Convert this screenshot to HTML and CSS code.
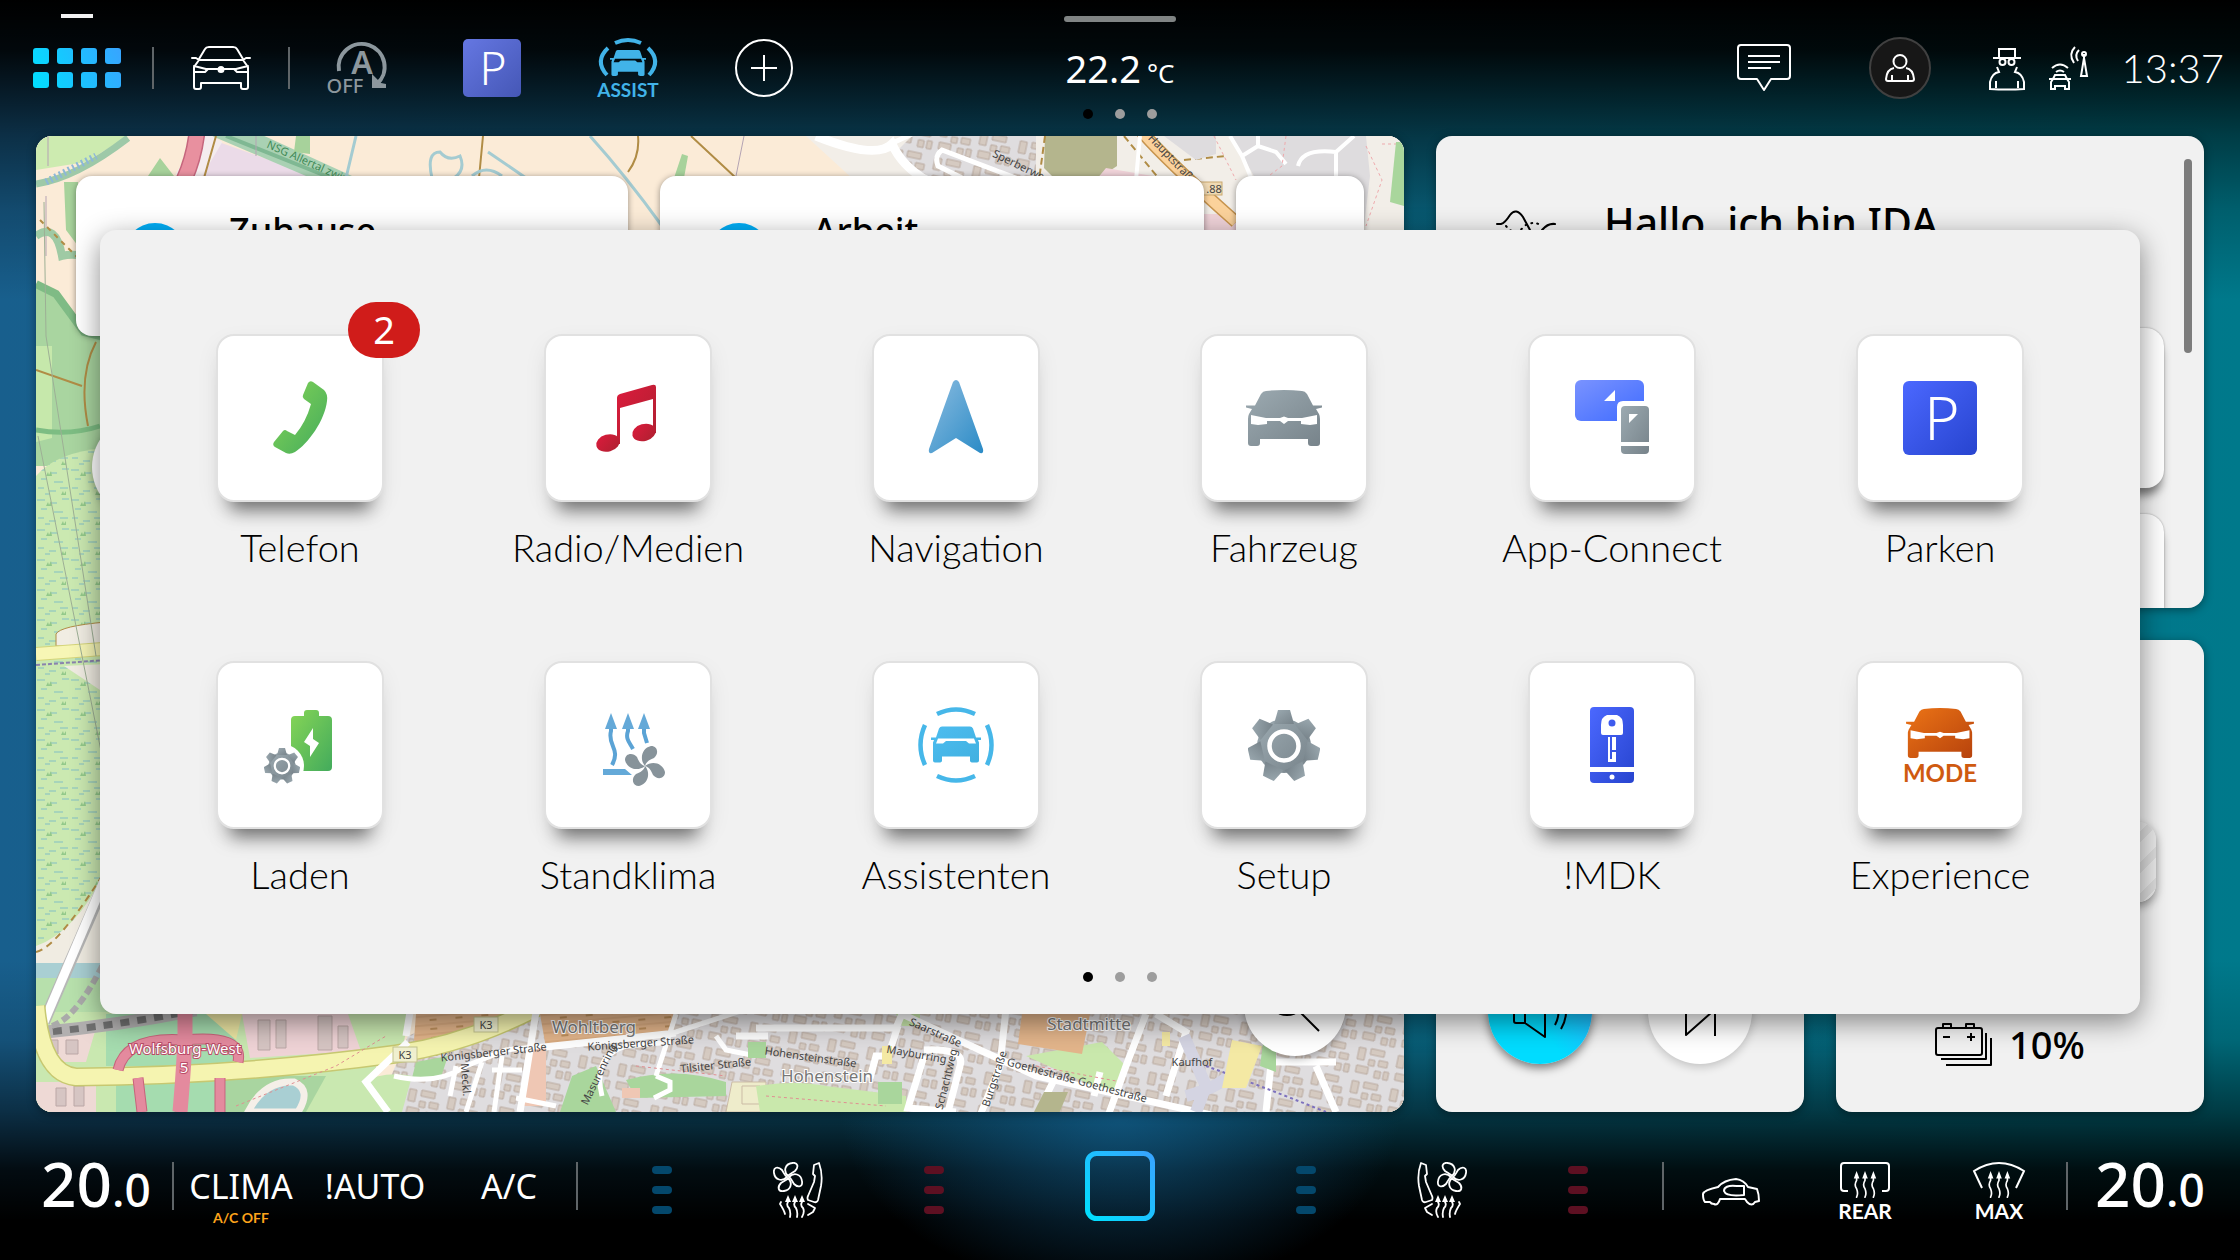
FILE: index.html
```html
<!DOCTYPE html>
<html lang="de">
<head>
<meta charset="utf-8">
<meta name="viewport" content="width=device-width, initial-scale=1">
<title>Infotainment</title>
<link rel="stylesheet" href="styles.css">
</head>
<body>
<svg class="defs" width="0" height="0" aria-hidden="true">
  <defs>
    <linearGradient id="g-green" x1="0" y1="0" x2="1" y2="1"><stop offset="0" stop-color="#86d556"/><stop offset="1" stop-color="#43ab5c"/></linearGradient>
    <linearGradient id="g-red" x1="0" y1="0" x2="1" y2="1"><stop offset="0" stop-color="#dc1b3c"/><stop offset="1" stop-color="#ad2030"/></linearGradient>
    <linearGradient id="g-blue" x1="0" y1="0" x2="1" y2="1"><stop offset="0" stop-color="#8bbce0"/><stop offset="1" stop-color="#2b8bc6"/></linearGradient>
    <linearGradient id="g-grey" x1="0" y1="0" x2="1" y2="1"><stop offset="0" stop-color="#9caab1"/><stop offset="1" stop-color="#77838a"/></linearGradient>
    <linearGradient id="g-indigo" x1="0" y1="0" x2="1" y2="1"><stop offset="0" stop-color="#4b68ff"/><stop offset="1" stop-color="#2744cf"/></linearGradient>
    <linearGradient id="g-sky" x1="0" y1="0" x2="1" y2="1"><stop offset="0" stop-color="#7a93ff"/><stop offset="1" stop-color="#3f6bff"/></linearGradient>
    <linearGradient id="g-cyan" x1="0" y1="0" x2="1" y2="1"><stop offset="0" stop-color="#4dbdf0"/><stop offset="1" stop-color="#40b0e0"/></linearGradient>
    <linearGradient id="g-orange" x1="0" y1="0" x2="1" y2="1"><stop offset="0" stop-color="#ec7416"/><stop offset="1" stop-color="#b6420c"/></linearGradient>
    <linearGradient id="g-park" x1="0" y1="0" x2="1" y2="1"><stop offset="0" stop-color="#6577e2"/><stop offset="1" stop-color="#4557b6"/></linearGradient>
    <linearGradient id="g-home" x1="0" y1="1" x2="1" y2="0"><stop offset="0" stop-color="#00e0ff"/><stop offset="1" stop-color="#38a4ff"/></linearGradient>
    <linearGradient id="g-apps" gradientUnits="userSpaceOnUse" x1="0" y1="40" x2="88" y2="0"><stop offset="0" stop-color="#00e0ff"/><stop offset="1" stop-color="#38a4ff"/></linearGradient>

    <symbol id="car-solid" viewBox="0 0 76 56">
      <path fill-rule="evenodd" d="M20 1Q38 -1 56 1Q59 1 61 4L67 15.500H76V17.500L70 19L73 24Q74 26 74 29V53Q74 56 71 56H65Q62 56 62 53V49H14V53Q14 56 11 56H5Q2 56 2 53V29Q2 26 3 24L6 19L0 17.500V15.500H9L15 4Q17 1 20 1ZM5 25V34L12 35L21 34V31H34L38 34L42 31H55V34L64 35L71 34V25L56 28H42L38 26.500L34 28H20Z"/>
    </symbol>
    <symbol id="car-assist" viewBox="0 0 50 36">
      <path fill-rule="evenodd" d="M11 0H39Q41 0 42 2L45 11H50V13.500H47L48 16V34Q48 36 46 36H42Q39 36 39 34V30H11V34Q11 36 8 36H4Q2 36 2 34V16L3 13.500H0V11H5L8 2Q9 0 11 0ZM7 12L5 17H12L15 14.500H35L38 17H45L43 12Z"/>
    </symbol>
    <symbol id="gear" viewBox="-36 -36 72 72">
      <circle r="27"/>
      <g id="teeth">
        <path id="tooth" d="M-10 -22L-6 -36H6L10 -22Z"/>
        <use href="#tooth" transform="rotate(51.430)"/><use href="#tooth" transform="rotate(102.860)"/><use href="#tooth" transform="rotate(154.290)"/><use href="#tooth" transform="rotate(205.710)"/><use href="#tooth" transform="rotate(257.140)"/><use href="#tooth" transform="rotate(308.570)"/>
      </g>
      <circle r="14.500" fill="none" stroke="#fff" stroke-width="4.500"/>
    </symbol>
    <symbol id="seat" viewBox="0 0 50 56">
      <g fill="none" stroke="#fff" stroke-width="1.800" stroke-linejoin="round" stroke-linecap="round">
        <path id="vane" d="M15 14C10 9 12 2 19 1C25 0 26 5 22 9C19 11 16 12 15 14Z"/>
        <use href="#vane" transform="rotate(90 15 15)"/><use href="#vane" transform="rotate(180 15 15)"/><use href="#vane" transform="rotate(270 15 15)"/>
        <path d="M41 3L46 1Q50 12 48 24L45 38Q44 41 41 40L35 38Q34 36 35 34L41 20L42 14L40 12Z"/>
        <path d="M8 40L7 42Q11 48 12 52M35 42L42 46L40 50L35 53"/>
        <path d="M15 37V40Q13 43 16 46Q18 50 17 55M22 37V40Q20 43 23 46Q25 50 24 55M29 37V40Q27 43 30 46Q32 50 29 55"/>
      </g>
      <path fill="#fff" d="M12 40L15 33L18 40ZM19 40L22 33L25 40ZM26 40L29 33L32 40Z"/>
    </symbol>
    <symbol id="heat" viewBox="0 0 24 30">
      <path fill="none" stroke="#fff" stroke-width="1.800" stroke-linecap="round" d="M3 7V10Q0 15 3 19Q5 24 3 28M12 7V10Q9 15 12 19Q14 24 12 28M21 7V10Q18 15 21 19Q23 24 21 28"/>
      <path fill="#fff" d="M0 8L3 0L6 8ZM9 8L12 0L15 8ZM18 8L21 0L24 8Z"/>
    </symbol>

    <pattern id="marsh" width="34" height="30" patternUnits="userSpaceOnUse">
      <rect width="34" height="30" fill="#cbe9b1"/>
      <path d="M1 4H9M14 7H21M26 3H33M5 13H11M18 16H27M2 22H8M13 25H20M24 22H32M9 28H14" stroke="#84bfc3" stroke-width="1"/>
      <path d="M10 10l2-4 1 3 2-4 1 5zM25 29l2-4 1 3 2-3v4z" fill="#93c98a"/>
    </pattern>
    <pattern id="houses" width="40" height="34" patternUnits="userSpaceOnUse" patternTransform="rotate(12)">
      <rect width="40" height="34" fill="#dfdddf"/>
      <path d="M4 4h7v12h-7zM16 3h14v6h-14zM16 14h6v6h-6zM26 13h9v6h-9zM5 22h12v7h-12zM24 24h6v7h-6zM33 23h5v8h-5z" fill="#d5cac1" stroke="#b9aaa0" stroke-width="1"/>
    </pattern>
    <pattern id="allot" width="26" height="9" patternUnits="userSpaceOnUse" patternTransform="rotate(-5)">
      <rect width="26" height="9" fill="#e3b58b"/>
      <path d="M0 2H26" stroke="#cfa176" stroke-width="1"/><path d="M3 6H10" stroke="#9a6b2f" stroke-width="1"/>
    </pattern>
  </defs>
</svg>

<div class="screen">
  <header class="topbar">
    <nav class="top-left" aria-label="Schnellzugriff">
      <button class="slot slot-apps" aria-label="Apps" aria-expanded="true">
        <svg width="88" height="40" viewBox="0 0 88 40" fill="url(#g-apps)"><rect width="16" height="16" rx="3"/><rect x="24" width="16" height="16" rx="3"/><rect x="48" width="16" height="16" rx="3"/><rect x="72" width="16" height="16" rx="3"/><rect y="24" width="16" height="16" rx="3"/><rect x="24" y="24" width="16" height="16" rx="3"/><rect x="48" y="24" width="16" height="16" rx="3"/><rect x="72" y="24" width="16" height="16" rx="3"/></svg>
      </button>
      <button class="slot ruled" aria-label="Fahrzeug">
        <svg width="60" height="44" viewBox="0 0 60 44" fill="none" stroke="#fff" stroke-width="2" stroke-linejoin="round" stroke-linecap="round"><path d="M8 13L14 3Q15 1 18 1H42Q45 1 46 3L52 13M1 12H5L8 14H52L55 12H59M8 14L3 21V41Q3 43 5 43H8Q10 43 10 41V37H50V41Q50 43 52 43H55Q57 43 57 41V21L52 14M3 20L15 23H45L57 20M4 26H14L17 23M56 26H46L43 23"/><circle cx="30" cy="23.500" r="2.500" fill="#fff"/></svg>
      </button>
      <button class="slot ruled" aria-label="Start-Stopp aus">
        <svg width="62" height="54" viewBox="0 0 62 54"><path d="M13 30A23 23 0 1 1 51 43" fill="none" stroke="#8c979d" stroke-width="4"/><path d="M46 33V47H60V43L55 42Z" fill="#8c979d"/><text x="36" y="33" class="t-auto">A</text><text x="19" y="52" class="t-off">OFF</text></svg>
      </button>
      <button class="slot" aria-label="Parken">
        <svg width="58" height="58" viewBox="0 0 58 58"><rect width="58" height="58" rx="5" fill="url(#g-park)"/><text x="30" y="46" class="t-park-s">P</text></svg>
      </button>
      <button class="slot" aria-label="Assistenzsysteme">
        <svg width="64" height="60" viewBox="0 0 64 60"><g fill="none" stroke="#41b3e8" stroke-width="4"><path d="M19 5Q32 -1 45 5"/><path d="M12 10Q-2 23 11 37M52 10Q66 23 53 37"/></g><use href="#car-assist" x="14" y="12" width="36" height="26" fill="#41b3e8"/><text x="32" y="59" class="t-assist">ASSIST</text></svg>
      </button>
      <button class="slot" aria-label="Hinzufügen">
        <svg width="58" height="58" viewBox="0 0 58 58" fill="none" stroke="#fff" stroke-width="2"><circle cx="29" cy="29" r="28"/><path d="M29 16V42M16 29H42"/></svg>
      </button>
    </nav>
    <div class="top-center">
      <span class="handle"></span>
      <p class="outside">22.2<small>°C</small></p>
      <div class="dots"><i class="on"></i><i></i><i></i></div>
    </div>
    <div class="top-right">
      <button class="slot" aria-label="Nachrichten">
        <svg width="54" height="48" viewBox="0 0 54 48" fill="none" stroke="#fff" stroke-width="2" stroke-linejoin="round"><path d="M4 1H50Q53 1 53 4V32Q53 35 50 35H34L27 46L20 35H4Q1 35 1 32V4Q1 1 4 1ZM11 12H43M11 18H43M11 24H34"/></svg>
      </button>
      <button class="slot" aria-label="Profil">
        <span class="avatar"><svg width="30" height="28" viewBox="0 0 30 28" fill="none" stroke="#fff" stroke-width="2"><circle cx="15" cy="7.500" r="6.500"/><path d="M9 14Q2 15 1 25Q1 27 3 27H27Q29 27 29 25Q28 15 21 14M7 21V27M23 21V27"/></svg></span>
      </button>
      <div class="status">
        <svg width="38" height="43" viewBox="0 0 38 43" fill="none" stroke="#fff" stroke-width="2"><path d="M11 10V2H27V10M5 11H33" /><circle cx="14.500" cy="15" r="3"/><circle cx="23.500" cy="15" r="3"/><path d="M9 20L11 25Q4 26 2 35V42Q19 43 36 42V35Q34 26 27 25L29 20M8 34V41M30 34V41"/></svg>
        <svg width="40" height="44" viewBox="0 0 40 44" fill="none" stroke="#fff" stroke-width="2"><path d="M1 33H5L7 29H17L19 33H23M5 33L3 36V43H7V40H17V43H21V36L19 33ZM4 22Q12 15 20 22M8 26Q12 23 16 26M36 12L33 30H39ZM36 12V8M27 1Q20 8 26 17M31 4Q26 9 30 15"/><circle cx="36" cy="8" r="2"/></svg>
        <time class="clock">13:37</time>
      </div>
    </div>
  </header>

  <main class="dash">
    <section class="card map" aria-label="Karte">
      <svg class="map-art" viewBox="0 0 1368 976" preserveAspectRatio="xMinYMin slice">
        <rect width="1368" height="976" fill="#fbebd7"/>
        <path d="M0 0H92L50 26L0 34Z" fill="#cdebb0"/><path d="M0 48Q40 42 92 2" fill="none" stroke="#9ec9a8" stroke-width="7"/><path d="M10 46L60 20" stroke="#8db7d8" stroke-width="7" stroke-dasharray="2 3"/>
        <path d="M166 0L290 44H166Z" fill="#ebdbe8"/><path d="M176 0L224 -2L316 40H270Z" fill="#a9d1b3"/><path d="M190 0L300 44" stroke="#7fb893" stroke-width="4"/>
        <path d="M112 40L124 22L138 40ZM260 0H274V18L258 16ZM646 18L652 20L648 42H638ZM28 46H42V110L30 94Z" fill="#a7d29b"/>
        <path d="M150 44L176 0" stroke="#f4ecee" stroke-width="24"/><path d="M148 44Q158 22 161 -4" fill="none" stroke="#c5667d" stroke-width="17"/><path d="M148 44Q158 22 161 -4" fill="none" stroke="#e8909f" stroke-width="14"/>
        <path d="M180 0L168 42M447 0L443 42M655 0L700 42M602 0Q604 20 592 36" fill="none" stroke="#b08c45" stroke-width="2"/>
        <path d="M320 0L310 42M554 0Q590 40 626 90M396 42Q390 16 404 16Q412 26 424 20Q430 34 418 42M436 40Q450 28 466 40M452 16L490 42" fill="none" stroke="#a4cbd1" stroke-width="3"/>
        <path d="M12 0V30M10 60V120M220 0V20M708 0L700 40" stroke="#b5a3b3" stroke-width="1"/>
        <text class="m-label green" transform="translate(272 30) rotate(24)">NSG Allertal zwisc</text>
        <path d="M770 0H1368V110H890Z" fill="#f2eee8"/>
        <path d="M876 0H1000V44H890L860 16Z" fill="url(#houses)"/><path d="M780 0Q840 24 856 8Q866 30 890 44" fill="none" stroke="#fff" stroke-width="9"/><path d="M850 10L876 -2M985 44L906 14Q898 20 902 30L930 44" fill="none" stroke="#fff" stroke-width="5"/>
        <path d="M1009 0H1081V30L1060 44H1020L1008 32Z" fill="#b4b58d"/><path d="M1009 0L1003 44M1088 0L1124 44M1148 24L1190 20" stroke="#b08c45" stroke-width="2" stroke-dasharray="7 4"/>
        <path d="M1060 44L1070 32L1140 44V100H1050ZM1160 78H1200V100H1160Z" fill="#f0d3d9"/><path d="M1128 0H1180V18L1160 24ZM1196 0H1330L1334 40L1328 90L1290 44H1220Z" fill="#dedcde"/>
        <path d="M1106 -4Q1130 24 1200 86" fill="none" stroke="#c7944e" stroke-width="13"/><path d="M1106 -4Q1130 24 1200 86" fill="none" stroke="#fbd29b" stroke-width="10"/>
        <path d="M1104 0L1100 44M1194 0L1206 20L1216 44M1206 20L1222 10L1240 16L1250 28M1222 10V0M1262 30Q1266 12 1300 16V44M1300 16L1318 0" fill="none" stroke="#fff" stroke-width="4"/>
        <path d="M1178 0L1200 44M1330 10L1346 44L1330 90M1346 8H1368M1250 0L1246 30L1230 42" fill="none" stroke="#eea9ac" stroke-width="1" stroke-dasharray="3 3"/>
        <path d="M1360 6H1368V70L1354 66Z" fill="#a9d69c"/><rect x="1156" y="46" width="30" height="13" fill="#efd9b4" stroke="#c9a86f"/><text class="m-label" x="1178" y="57">.88</text>
        <text class="m-label" transform="translate(984 34) rotate(26)">Sperberweg</text><text class="m-label" transform="translate(1134 26) rotate(46)">Hauptstraße</text>

        <path d="M0 100Q20 86 26 120Q40 116 60 124" fill="none" stroke="#9fcaa4" stroke-width="8"/><path d="M4 84L50 130" stroke="#b08c45" stroke-width="2" stroke-dasharray="5 5"/>
        <path d="M0 148L20 158L48 196L80 204V330H0Z" fill="#a9d5a0"/><path d="M0 148L20 158L48 196L80 204" fill="none" stroke="#7fbb85" stroke-width="8"/><path d="M0 210H16V302L0 306Z" fill="#c6e8ab"/><path d="M0 234L46 250M60 206Q42 240 52 290" fill="none" stroke="#b08c45" stroke-width="2"/><path d="M0 294Q34 300 64 290" fill="none" stroke="#7dbd83" stroke-width="5"/>
        <path d="M0 340Q20 316 70 312V830H0Z" fill="url(#marsh)"/>
        <path d="M20 510V498Q24 490 70 486V512Z" fill="#f1ede3" stroke="#b08c45"/><path d="M0 518L80 512" stroke="#d5d57a" stroke-width="14"/><path d="M0 518L80 512" stroke="#f7f6b5" stroke-width="12"/><path d="M0 529L70 524" stroke="#8a83ad" stroke-width="2" stroke-dasharray="4 2"/><path d="M28 530L70 528V558Z" fill="#f0ece2"/>
        <path d="M8 66L10 200L60 520M2 300L70 640" fill="none" stroke="#9daf95" stroke-width="1"/>
        <path d="M0 810Q40 796 70 734V830H0Z" fill="#f0ece2"/><path d="M0 816Q20 812 66 740" fill="none" stroke="#b08c45" stroke-width="2" stroke-dasharray="7 5"/>
        <path d="M0 827H80V842H0Z" fill="#a9cfd3"/><path d="M0 842H80V880H0Z" fill="#b7e0ac"/>

        <path d="M0 876H340V976H0Z" fill="#c9e8b0"/><path d="M0 900L60 892L50 926H8ZM0 946H60V976H0Z" fill="#eed9d5"/><path d="M70 878H200V930H70ZM80 942H190V976H80Z" fill="#a5dcaf"/><path d="M170 878H206L200 904Z" fill="#ece6a3"/><path d="M206 878H350L340 914L214 922Z" fill="#efd3d6"/><path d="M312 878H374L366 914L326 918Z" fill="#c9e8b0"/>
        <path d="M190 940H290L270 976H190Z" fill="#a9d5a0"/><path d="M212 976Q228 944 258 946Q276 954 262 976Z" fill="#a9cfd3" stroke="#f5efe8" stroke-width="7"/>
        <path d="M222 884h12v30h-12zM240 884h10v28h-10zM282 880h14v34h-14zM302 890h10v22h-10zM10 904h12v14h-12zM30 904h12v14h-12zM20 952h10v18h-10zM38 950h10v20h-10z" fill="#d6c5c3" stroke="#bba7a6"/>
        <path d="M0 897Q80 890 160 874" fill="none" stroke="#b2b0b0" stroke-width="13"/><path d="M0 897Q80 890 160 874" fill="none" stroke="#707070" stroke-width="7" stroke-dasharray="9 8"/>
        <path d="M8 886L76 730" stroke="#b7b7b7" stroke-width="12"/><path d="M8 886L70 740" stroke="#fff" stroke-width="9"/><path d="M16 890Q46 880 80 800" fill="none" stroke="#aaa" stroke-width="6" stroke-dasharray="8 4"/>
        <path d="M340 976L372 900L420 878H1368V976Z" fill="url(#houses)"/>
        <path d="M380 878H500L470 894L400 920L378 904ZM504 878H640L636 900L510 912Z" fill="url(#allot)"/>
        <path d="M0 870Q6 938 40 941Q200 940 360 918Q430 908 500 872" fill="none" stroke="#c7c871" stroke-width="19"/><path d="M0 870Q6 938 40 941Q200 940 360 918Q430 908 500 872" fill="none" stroke="#f5f4b0" stroke-width="16"/>
        <path d="M149 874V900Q148 930 144 976M82 934Q90 900 148 904Q208 898 202 926M102 942L106 976M184 942V976" fill="none" stroke="#c7637b" stroke-width="11"/><path d="M149 874V900Q148 930 144 976M82 934Q90 900 148 904Q208 898 202 926M102 942L106 976M184 942V976" fill="none" stroke="#e48a9e" stroke-width="9"/><path d="M149 874V900Q148 930 144 976" fill="none" stroke="#e48a9e" stroke-width="15"/>
        <path d="M380 926L412 920L404 944L376 942ZM536 940L560 930L580 976H524ZM590 944Q640 930 690 946V960L600 962Z" fill="#a9d69c"/><path d="M286 976Q330 930 376 940L366 976Z" fill="#c9e8b0"/><path d="M496 912H510V970H484ZM586 952h18v10h-18z" fill="#efc7b4"/><path d="M696 946H730V976H690ZM706 950h18v18h-18z" fill="#eeeccb" stroke="#cbbba5"/>
        <path d="M352 976L330 946L372 906M500 876L484 976M374 876L370 900" fill="none" stroke="#fff" stroke-width="7"/>
        <path d="M358 940Q400 950 430 930L470 914L640 896L720 870M466 920L458 976M446 926L430 976M420 930L414 960M456 934H486M510 912L640 898M640 878L620 940M620 940L634 946V954L618 962M566 960Q556 920 590 910L636 906M680 900L690 914L720 920M480 962L520 970" fill="none" stroke="#fff" stroke-width="5"/>
        <path d="M720 950Q760 944 790 950L870 960V976H724ZM990 920L1066 906L1090 930L1080 960ZM860 878H884V890H866Z" fill="#c9e8ac"/><path d="M842 946h24v22h-24zM712 906h18v16h-18z" fill="#a9d69c"/>
        <path d="M720 892H860L866 878L1000 940L1180 980M970 872L964 930L944 980M1110 878L1090 930L1072 980M1010 960L1020 940M1058 960L1064 936M1120 878L1150 896L1130 960M1240 880L1230 976M1232 926H1300M1280 930L1300 976M862 890L852 920H840L834 942M888 920L872 972L920 976M888 914Q930 912 924 930L912 976M700 900H732" fill="none" stroke="#fff" stroke-width="7"/>
        <path d="M986 878H1054L1046 918L982 908Z" fill="#e3b58b"/><path d="M1008 956H1032L1022 980H996Z" fill="#b4b58d"/><path d="M1148 900L1170 950L1160 976M1150 960Q1190 950 1200 930" fill="none" stroke="#d4d4e2" stroke-width="12"/><path d="M1170 930Q1220 948 1290 976" fill="none" stroke="#7d71be" stroke-width="2" stroke-dasharray="3 3"/>
        <path d="M1196 904L1226 910L1210 952H1186ZM846 910h10v18h-10zM1126 896h8v14h-8zM1240 896h10v20h-10z" fill="#f4e9a4"/><path d="M1228 900H1240V936L1224 930Z" fill="#a9d69c"/>
        <path d="M200 970L300 930L350 900M600 930L690 940M730 960L850 970M1000 930L1080 945" fill="none" stroke="#e08f92" stroke-width="1" stroke-dasharray="3 3"/>
        <text class="m-town pink" x="149" y="918">Wolfsburg-West</text><text class="m-town pink" x="148" y="937">5</text>
        <g fill="#f0f0cf" stroke="#c3c38e"><rect x="357" y="911" width="24" height="15"/><rect x="438" y="881" width="24" height="15"/></g><text class="m-label" x="369" y="923">K3</text><text class="m-label" x="450" y="893">K3</text>
        <text class="m-town" x="558" y="897">Wohltberg</text><text class="m-town" x="791" y="946">Hohenstein</text><text class="m-town" x="1053" y="894">Stadtmitte</text>
        <text class="m-label" transform="translate(458 920) rotate(-6)">Königsberger Straße</text><text class="m-label" transform="translate(605 911) rotate(-4)">Königsberger Straße</text><text class="m-label" transform="translate(680 933) rotate(-6)">Tilsiter Straße</text>
        <text class="m-label" transform="translate(898 900) rotate(24)">Saarstraße</text><text class="m-label" transform="translate(1040 948) rotate(15)">Goethestraße Goethestraße</text><text class="m-label" transform="translate(774 925) rotate(8)">Hohensteinstraße</text><text class="m-label" transform="translate(880 922) rotate(10)">Mayburring</text><text class="m-label" x="1156" y="930">Kaufhof</text><text class="m-label" transform="translate(962 944) rotate(-72)">Burgstraße</text><text class="m-label" transform="translate(426 944) rotate(86)">Meckl.</text><text class="m-label" transform="translate(566 940) rotate(-64)">Masurenring</text><text class="m-label" transform="translate(914 944) rotate(-76)">Schachtweg</text>
      </svg>
      <div class="favs">
        <article class="fav"><span class="pin"></span><h2>Zuhause</h2></article>
        <article class="fav"><span class="pin"></span><h2>Arbeit</h2></article>
        <article class="fav"></article>
      </div>
      <span class="fab fab-left"></span>
      <button class="fab fab-search" aria-label="Suche"><svg width="56" height="56" viewBox="0 0 56 56" fill="none" stroke="#000" stroke-width="2"><circle cx="20" cy="20" r="18"/><path d="M32 34L52 54"/></svg></button>
    </section>

    <section class="card ida">
      <div class="ida-head">
        <svg width="60" height="32" viewBox="0 0 60 32" fill="none" stroke="#000" stroke-width="2" stroke-linecap="round"><path d="M1 14H5Q9 13 14 5Q20 -3 27 7L34 20Q38 30 46 20Q52 13 59 14"/><path stroke-dasharray="1 5" d="M10 16Q20 28 28 16Q38 10 46 16"/></svg>
        <h1>Hallo, ich bin IDA</h1>
      </div>
      <div class="ida-item"></div>
      <div class="ida-item ida-item-cut"></div>
      <span class="scroll"></span>
    </section>

    <section class="card media">
      <button class="round cyan" aria-label="Ton"><svg width="58" height="58" viewBox="0 0 58 58" fill="none" stroke="#000" stroke-width="2" stroke-linejoin="round"><path d="M3 18H14L34 4V54L14 40H5Q3 40 3 38ZM14 18V40M44 16Q51 29 44 42M50 12Q60 29 50 46"/></svg></button>
      <button class="round" aria-label="Weiter"><svg width="32" height="50" viewBox="0 0 32 50" fill="none" stroke="#000" stroke-width="2" stroke-linejoin="round"><path d="M2 2L28 25L2 48ZM31 1V49"/></svg></button>
    </section>

    <section class="card battery">
      <span class="ghost"></span>
      <p class="charge"><svg width="58" height="45" viewBox="0 0 58 45" fill="none" stroke="#000" stroke-width="2" stroke-linejoin="round"><rect x="1" y="6" width="46" height="27" rx="2"/><path d="M8 6V2H16V6M31 6V2H39V6M8 15H15M32 15H40M36 11V19M51 11V37H6M56 16V43H11"/></svg>10%</p>
    </section>

    <section class="launcher" role="dialog" aria-label="Apps">
      <div class="apps">
        <button class="app"><span class="tile"><svg viewBox="0 0 80 80"><path fill="url(#g-green)" d="M48 5Q50 2 53 4L64 12Q68 16 67 23C65 42 48 66 35 74Q30 77 26 75L15 69Q12 67 14 64L23 53Q25 51 27 53L35 57Q46 44 51 26L44 21Q42 19 43 17Z"/></svg></span><span class="badge">2</span><span class="name">Telefon</span></button>
        <button class="app"><span class="tile"><svg viewBox="0 0 80 80" fill="url(#g-red)"><path d="M29 20Q29 17 32 16L64 7Q68 6 68 9V55H65V21L32 30V66H29Z"/><ellipse cx="20" cy="65" rx="12" ry="8.500" transform="rotate(-16 20 65)"/><ellipse cx="56" cy="54.500" rx="12" ry="8.500" transform="rotate(-16 56 54.500)"/></svg></span><span class="name">Radio/Medien</span></button>
        <button class="app"><span class="tile"><svg viewBox="0 0 80 80"><path fill="url(#g-blue)" d="M37 4Q40 0 43 4L67 71Q68 76 64 75L40 60L16 75Q12 76 13 71Z"/></svg></span><span class="name">Navigation</span></button>
        <button class="app"><span class="tile"><svg viewBox="0 0 80 80" fill="url(#g-grey)"><use href="#car-solid" x="2" y="12" width="76" height="56"/></svg></span><span class="name">Fahrzeug</span></button>
        <button class="app"><span class="tile"><svg viewBox="0 0 80 80"><rect x="3" y="2" width="69" height="41" rx="6" fill="url(#g-sky)"/><path fill="#fff" d="M43 12V23H32ZM45 45V29Q45 23 51 23H80V45Z"/><rect x="49" y="28" width="28" height="48" rx="4" fill="url(#g-grey)"/><path fill="#fff" d="M49 64H77V68H49ZM57 36H66L57 45Z"/></svg></span><span class="name">App-Connect</span></button>
        <button class="app"><span class="tile"><svg viewBox="0 0 80 80"><rect x="3" y="3" width="74" height="74" rx="6" fill="url(#g-indigo)"/><text x="42" y="62" class="t-park">P</text></svg></span><span class="name">Parken</span></button>
        <button class="app"><span class="tile"><svg viewBox="0 0 80 80"><path fill="url(#g-green)" d="M44 11V8Q44 5 47 5H56Q59 5 59 8V11H68Q72 11 72 15V62Q72 66 68 66H35Q31 66 31 62V15Q31 11 35 11Z"/><path fill="#fff" d="M53 23L44 37L50 41V52L59 38L53 34Z"/><circle cx="22" cy="61" r="22" fill="#fff"/><use href="#gear" x="4" y="43" width="36" height="36" fill="url(#g-grey)"/></svg></span><span class="name">Laden</span></button>
        <button class="app"><span class="tile"><svg viewBox="0 0 80 80"><g fill="none" stroke="#5ba3d5" stroke-width="4"><path d="M23 22V26C19 40 33 44 24 60M40 22V26C37 34 42 38 45 44M56 22V28L59 38"/></g><path fill="#64a9d8" d="M17 24L23 8L29 24ZM34 24L40 8L46 24ZM50 24L56 8L62 24ZM15 64H37L44 70H15Z"/><g fill="#87939a"><path id="blade" d="M57 61C51 54 54 43 63 41C70 41 71 49 66 53C61 55 58 57 57 61Z"/><use href="#blade" transform="rotate(90 57 61)"/><use href="#blade" transform="rotate(180 57 61)"/><use href="#blade" transform="rotate(270 57 61)"/></g></svg></span><span class="name">Standklima</span></button>
        <button class="app"><span class="tile"><svg viewBox="0 0 80 80"><g fill="none" stroke="#46b7e9" stroke-width="4.500"><path d="M21 9Q40 0 59 9M21 71Q40 80 59 71M9 20Q0 40 9 60M71 20Q80 40 71 60"/></g><use href="#car-assist" x="15" y="21" width="50" height="37" fill="url(#g-cyan)"/></svg></span><span class="name">Assistenten</span></button>
        <button class="app"><span class="tile"><svg viewBox="0 0 80 80"><use href="#gear" x="4" y="5" width="72" height="72" fill="url(#g-grey)"/></svg></span><span class="name">Setup</span></button>
        <button class="app"><span class="tile"><svg viewBox="0 0 80 80"><rect x="18" y="2" width="44" height="76" rx="4" fill="url(#g-indigo)"/><path fill="#fff" d="M18 62H62V67H18Z"/><circle cx="40" cy="72" r="2.500" fill="#fff"/><path fill="#fff" fill-rule="evenodd" d="M35 10H45Q51 12 51 20V28Q51 30 49 30H31Q29 30 29 28V20Q29 12 35 10ZM40 14.500A3.500 3.500 0 1 0 40 21.500A3.500 3.500 0 1 0 40 14.500ZM36 32H38V54H40V47H44V57H36ZM40 32H44V45H40Z"/></svg></span><span class="name">!MDK</span></button>
        <button class="app"><span class="tile"><svg viewBox="0 0 80 80"><use href="#car-solid" x="6" y="3" width="68" height="50" fill="url(#g-orange)"/><text x="40" y="77" class="t-mode">MODE</text></svg></span><span class="name">Experience</span></button>
      </div>
      <div class="dots"><i class="on"></i><i></i><i></i></div>
    </section>
  </main>

  <footer class="climate">
    <p class="temp">20<small>.0</small></p>
    <div class="trio edged">
      <button class="txt">CLIMA<small>A/C OFF</small></button>
      <button class="txt">!AUTO</button>
      <button class="txt">A/C</button>
    </div>
    <div class="trio seat-l">
      <span class="bars blue"><i></i><i></i><i></i></span>
      <button class="txt" aria-label="Sitz links"><svg width="50" height="56"><use href="#seat"/></svg></button>
      <span class="bars red"><i></i><i></i><i></i></span>
    </div>
    <button class="home" aria-label="Home"><svg width="70" height="70" viewBox="0 0 70 70" fill="none" stroke="url(#g-home)" stroke-width="5"><rect x="2.500" y="2.500" width="65" height="65" rx="9"/></svg></button>
    <div class="trio seat-r">
      <span class="bars blue"><i></i><i></i><i></i></span>
      <button class="txt" aria-label="Sitz rechts"><svg width="50" height="56" viewBox="0 0 50 56"><g transform="translate(50 0) scale(-1 1)"><use href="#seat" width="50" height="56"/></g></svg></button>
      <span class="bars red"><i></i><i></i><i></i></span>
    </div>
    <div class="trio edged">
      <button class="txt" aria-label="Umluft"><svg width="58" height="28" viewBox="0 0 58 28" fill="none" stroke="#fff" stroke-width="2" stroke-linejoin="round"><path d="M8 24H3Q1 22 1 16Q2 12 16 9Q22 2 34 1Q42 2 46 9L55 11Q57 16 57 23L53 24Q50 29 45 24L43 21H18Q16 28 12 26Q9 26 8 24Z"/><path d="M34 8Q22 7 22 13Q24 19 42 17V8H34"/></svg></button>
      <button class="txt stack"><svg width="50" height="38" viewBox="0 0 50 38"><path d="M8 29H4Q1 29 1 26V4Q1 1 4 1H46Q49 1 49 4V26Q49 29 46 29H42" fill="none" stroke="#fff" stroke-width="2"/><use href="#heat" x="13" y="9" width="24" height="28"/></svg>REAR</button>
      <button class="txt stack"><svg width="52" height="38" viewBox="0 0 52 38"><path d="M9 26L1 9Q26 -7 51 9L43 26" fill="none" stroke="#fff" stroke-width="2"/><use href="#heat" x="14" y="9" width="24" height="28"/></svg>MAX</button>
    </div>
    <p class="temp">20<small>.0</small></p>
  </footer>
</div>
</body>
</html>
```

FILE: styles.css
```css
* { box-sizing: border-box; }

body {
  margin: 0;
  font-family: "Noto Sans", "Open Sans", sans-serif;
  color: #fff;
}

h1, h2, p { margin: 0; font-weight: 500; }

button {
  margin: 0;
  padding: 0;
  border: 0;
  background: none;
  color: inherit;
  font: inherit;
  cursor: pointer;
}

svg { display: block; overflow: visible; }
.defs { position: absolute; }

.screen {
  display: flex;
  flex-direction: column;
  min-height: 100vh;
  background:
    linear-gradient(to bottom, #000 0, rgba(0, 0, 0, .92) 50px, rgba(0, 0, 0, .5) 136px, rgba(0, 0, 0, .22) 210px, transparent 300px),
    radial-gradient(ellipse 280px 180px at 50% calc(100% - 148px), rgba(20, 100, 150, .7), transparent),
    linear-gradient(to top, #000 0, #000 40px, rgba(0, 0, 0, .88) 90px, rgba(0, 0, 0, .5) 150px, rgba(0, 0, 0, .15) 220px, transparent 300px),
    linear-gradient(to right, #185f8d 0, #0d6a8c 50%, #00798b 100%);
}

/* top bar */
.topbar {
  display: grid;
  grid-template-columns: 1fr auto 1fr;
  height: 136px;
}
.top-left, .top-right { display: flex; align-items: center; }
.top-right { justify-content: flex-end; padding-right: 16px; }
.slot {
  position: relative;
  display: flex;
  align-items: center;
  justify-content: center;
  width: 136px;
  height: 42px;
}
.slot-apps { width: 152px; padding-left: 2px; }
.slot-apps::before {
  content: "";
  position: absolute;
  top: -33px;
  width: 32px;
  height: 4px;
  background: #f2f2f2;
}
.ruled { border-left: 2px solid #5f6568; }
.top-center {
  display: flex;
  flex-direction: column;
  align-items: center;
  padding-top: 16px;
}
.handle { width: 112px; height: 6px; border-radius: 3px; background: #808484; }
.outside { margin-top: 18px; height: 56px; font-size: 38px; line-height: 56px; font-weight: 400; white-space: nowrap; }
.outside small { margin-left: 6px; font-size: 26px; }
.dots { display: flex; justify-content: center; gap: 22px; }
.dots i { width: 10px; height: 10px; border-radius: 50%; background: #9d9d9d; }
.dots .on { background: #000; }
.topbar .dots { margin-top: 13px; }
.avatar {
  display: grid;
  place-items: center;
  width: 62px;
  height: 62px;
  border: 2px solid #404040;
  border-radius: 50%;
  background: #171717;
}
.status { display: flex; align-items: center; gap: 22px; padding-left: 20px; }
.clock { margin-left: 12px; font-family: Lato, sans-serif; font-weight: 300; font-size: 40px; line-height: 48px; }

.t-auto, .t-off { fill: #8c979d; text-anchor: middle; }
.t-auto { font-size: 32px; font-weight: 600; }
.t-off { font-size: 20px; font-weight: 500; }
.t-assist { fill: #41b3e8; font: 700 19px Lato, sans-serif; text-anchor: middle; }
.t-park, .t-park-s { fill: #fff; font-weight: 300; text-anchor: middle; }
.t-park { font-size: 60px; }
.t-park-s { font-size: 46px; }
.t-mode { fill: #cf5a10; font: 700 24px Lato, sans-serif; text-anchor: middle; }

/* dashboard */
.dash {
  position: relative;
  flex: 1;
  display: grid;
  grid-template-columns: 1368fr 368fr 368fr;
  grid-template-rows: minmax(472px, 1fr) minmax(472px, 1fr);
  gap: 32px;
  padding: 0 36px;
  color: #000;
}
.card {
  position: relative;
  overflow: hidden;
  border-radius: 16px;
  background: #f1f1f1;
  box-shadow: 0 2px 10px rgba(0, 0, 0, .4);
}
.map { grid-row: 1 / 3; }
.ida { grid-column: 2 / 4; }
.map-art { position: absolute; inset: 0; width: 100%; height: 100%; }
.m-label { font-size: 11px; fill: #444; text-anchor: middle; }
.m-label.green { fill: #3f8a56; }
.m-town { font-size: 17px; fill: #777; text-anchor: middle; stroke: #fff; stroke-width: 2px; paint-order: stroke; }
.m-town.pink { font-size: 15px; fill: #fff; stroke: #bb4b68; }

.favs {
  position: relative;
  display: grid;
  grid-template-columns: 552fr 544fr 128fr;
  gap: 32px;
  padding: 40px;
}
.fav {
  display: flex;
  align-items: flex-start;
  gap: 42px;
  height: 160px;
  padding: 31px 47px 0;
  border-radius: 16px;
  background: #fff;
  box-shadow: 0 1px 6px rgba(0, 0, 0, .4);
}
.fav h2 { font-size: 36px; line-height: 48px; }
.pin { width: 64px; height: 64px; margin-top: 16px; border-radius: 50%; background: #00aef7; }
.fab {
  position: absolute;
  display: grid;
  place-items: center;
  width: 102px;
  height: 102px;
  border-radius: 50%;
  background: #fff;
  box-shadow: 0 3px 8px rgba(0, 0, 0, .3);
}
.fab-left { left: 56px; top: 280px; }
.fab-search { right: 58px; bottom: 56px; }

.ida { padding: 66px 40px 0; }
.ida-head { display: flex; align-items: flex-start; gap: 48px; height: 126px; padding-left: 20px; }
.ida-head svg { margin-top: 8px; }
.ida-head h1 { font-size: 41px; line-height: 40px; }
.ida-item {
  height: 160px;
  margin-bottom: 26px;
  border-radius: 18px;
  background: #fff;
  box-shadow: 0 0 2px #999, 0 10px 10px -3px rgba(0, 0, 0, .5);
}
.ida-item-cut { height: 94px; margin-bottom: 0; border-radius: 18px 18px 0 0; }
.scroll { position: absolute; top: 23px; right: 12px; width: 8px; height: 194px; border-radius: 4px; background: #7c7c7c; }

.media { display: flex; align-items: flex-end; justify-content: center; gap: 56px; padding-bottom: 48px; }
.round {
  display: grid;
  place-items: center;
  width: 104px;
  height: 104px;
  border-radius: 50%;
  background: #fff;
  box-shadow: 0 3px 10px rgba(0, 0, 0, .2);
}
.cyan { background: linear-gradient(55deg, #00dcff 45%, #33aaff); box-shadow: 0 4px 10px rgba(0, 0, 0, .5); }

.battery { display: flex; flex-direction: column; justify-content: flex-end; align-items: center; padding: 0 0 40px; }
.ghost {
  position: absolute;
  top: 182px;
  right: 48px;
  width: 120px;
  height: 80px;
  border-radius: 18px;
  background: repeating-linear-gradient(135deg, #e9e9e9 0 14px, #dcdcdc 14px 22px);
  box-shadow: 0 4px 10px rgba(0, 0, 0, .4);
}
.charge { display: flex; align-items: center; gap: 16px; margin-left: -20px; font-size: 38px; line-height: 56px; }

/* app launcher */
.launcher {
  position: absolute;
  inset: 94px 100px 98px;
  display: flex;
  flex-direction: column;
  justify-content: space-between;
  padding: 104px 36px 32px;
  border-radius: 16px;
  background: #f1f1f1;
  box-shadow: 0 8px 28px rgba(0, 0, 0, .45);
}
.apps { display: grid; grid-template-columns: repeat(6, 1fr); row-gap: 90px; }
.app { position: relative; display: flex; flex-direction: column; align-items: center; gap: 21px; }
.tile {
  display: grid;
  place-items: center;
  width: 168px;
  height: 168px;
  border: 2px solid #e1e1e1;
  border-radius: 18px;
  background: #fff;
  box-shadow: 0 22px 18px -14px rgba(0, 0, 0, .5), 0 8px 24px -4px rgba(0, 0, 0, .1);
}
.tile svg { width: 80px; height: 80px; }
.name { font-family: Lato, sans-serif; font-weight: 300; font-size: 38px; line-height: 48px; white-space: nowrap; }
.badge {
  position: absolute;
  top: -32px;
  left: calc(50% + 48px);
  width: 72px;
  height: 56px;
  border-radius: 28px;
  background: #d01c1a;
  color: #fff;
  font-size: 38px;
  line-height: 54px;
}

/* climate bar */
.climate {
  display: grid;
  grid-template-columns: 172fr 406fr 16fr 408fr 236fr 408fr 16fr 406fr 172fr;
  align-items: center;
  height: 148px;
}
.seat-l { grid-column: 4; }
.seat-r { grid-column: 6; }
.climate .seat-r + .trio { grid-column: 8; }
.temp { text-align: center; padding-left: 20px; font-size: 62px; line-height: 72px; }
.climate > .temp:last-child { padding: 0 8px 0 0; }
.temp small { font-size: 46px; }
.trio {
  display: grid;
  grid-template-columns: repeat(3, 1fr);
  align-items: center;
  justify-items: center;
  height: 48px;
}
.edged { border: solid #5f6568; border-width: 0 2px; }
.txt { position: relative; font-size: 34px; line-height: 48px; }
.txt > small {
  position: absolute;
  top: 46px;
  left: 0;
  right: 0;
  color: #fda41b;
  font: 700 14px/20px Lato, sans-serif;
}
.stack { display: flex; flex-direction: column; align-items: center; font: 700 21px/22px Lato, sans-serif; }
.bars { display: flex; flex-direction: column; gap: 12px; }
.bars i { width: 20px; height: 8px; border-radius: 4px; }
.blue i { background: #04486c; }
.red i { background: #5d1022; }
.home { justify-self: center; }
```
